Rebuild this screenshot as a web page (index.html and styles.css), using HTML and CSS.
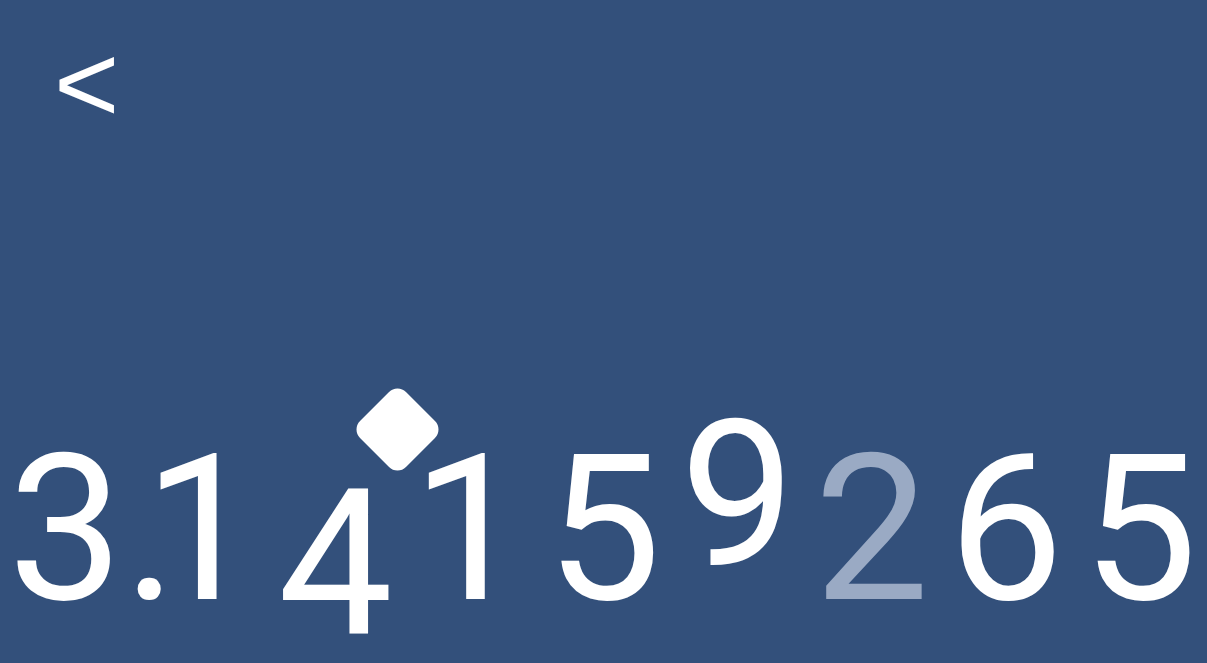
FILE: index.html
```html
<!DOCTYPE html>
<html>
<head>
<meta charset="utf-8">
<title>Pi</title>
<link rel="stylesheet" href="styles.css">
</head>
<body>
<div class="screen">
  <header class="top">
    <span class="back">&lt;</span>
  </header>
  <div class="digits">
    <span class="marker"></span>
    <span class="d">3<span class="dot">.</span></span>
    <span class="d">1</span>
    <span class="d down">4</span>
    <span class="d">1</span>
    <span class="d">5</span>
    <span class="d up">9</span>
    <span class="d dim">2</span>
    <span class="d">6</span>
    <span class="d">5</span>
  </div>
</div>
</body>
</html>
```

FILE: styles.css
```css
html, body {
  margin: 0;
  padding: 0;
}
body {
  background: #33507b;
  font-family: "Liberation Sans", Arimo, sans-serif;
  color: #ffffff;
}
.screen {
  width: 1207px;
  height: 663px;
  display: flex;
  flex-direction: column;
  justify-content: space-between;
  padding-bottom: 31px;
  box-sizing: border-box;
  overflow: hidden;
}
.top {
  padding: 28px 0 0 54px;
}
.back {
  display: inline-block;
  font-size: 112px;
  line-height: 1;
}
.digits {
  position: relative;
  display: flex;
  font-family: Roboto, "Liberation Sans", sans-serif;
  font-size: 205px;
  line-height: 1;
}
.d {
  flex: 1 1 0;
  text-align: center;
}
.dot {
  margin-right: -0.25em;
}
.down {
  transform: translateY(35px);
}
.up {
  transform: translateY(-34px);
}
.dim {
  color: #9aaac4;
}
.marker {
  position: absolute;
  left: 365px;
  top: -30px;
  width: 65px;
  height: 65px;
  background: #ffffff;
  border-radius: 12px;
  transform: rotate(45deg);
}
```
